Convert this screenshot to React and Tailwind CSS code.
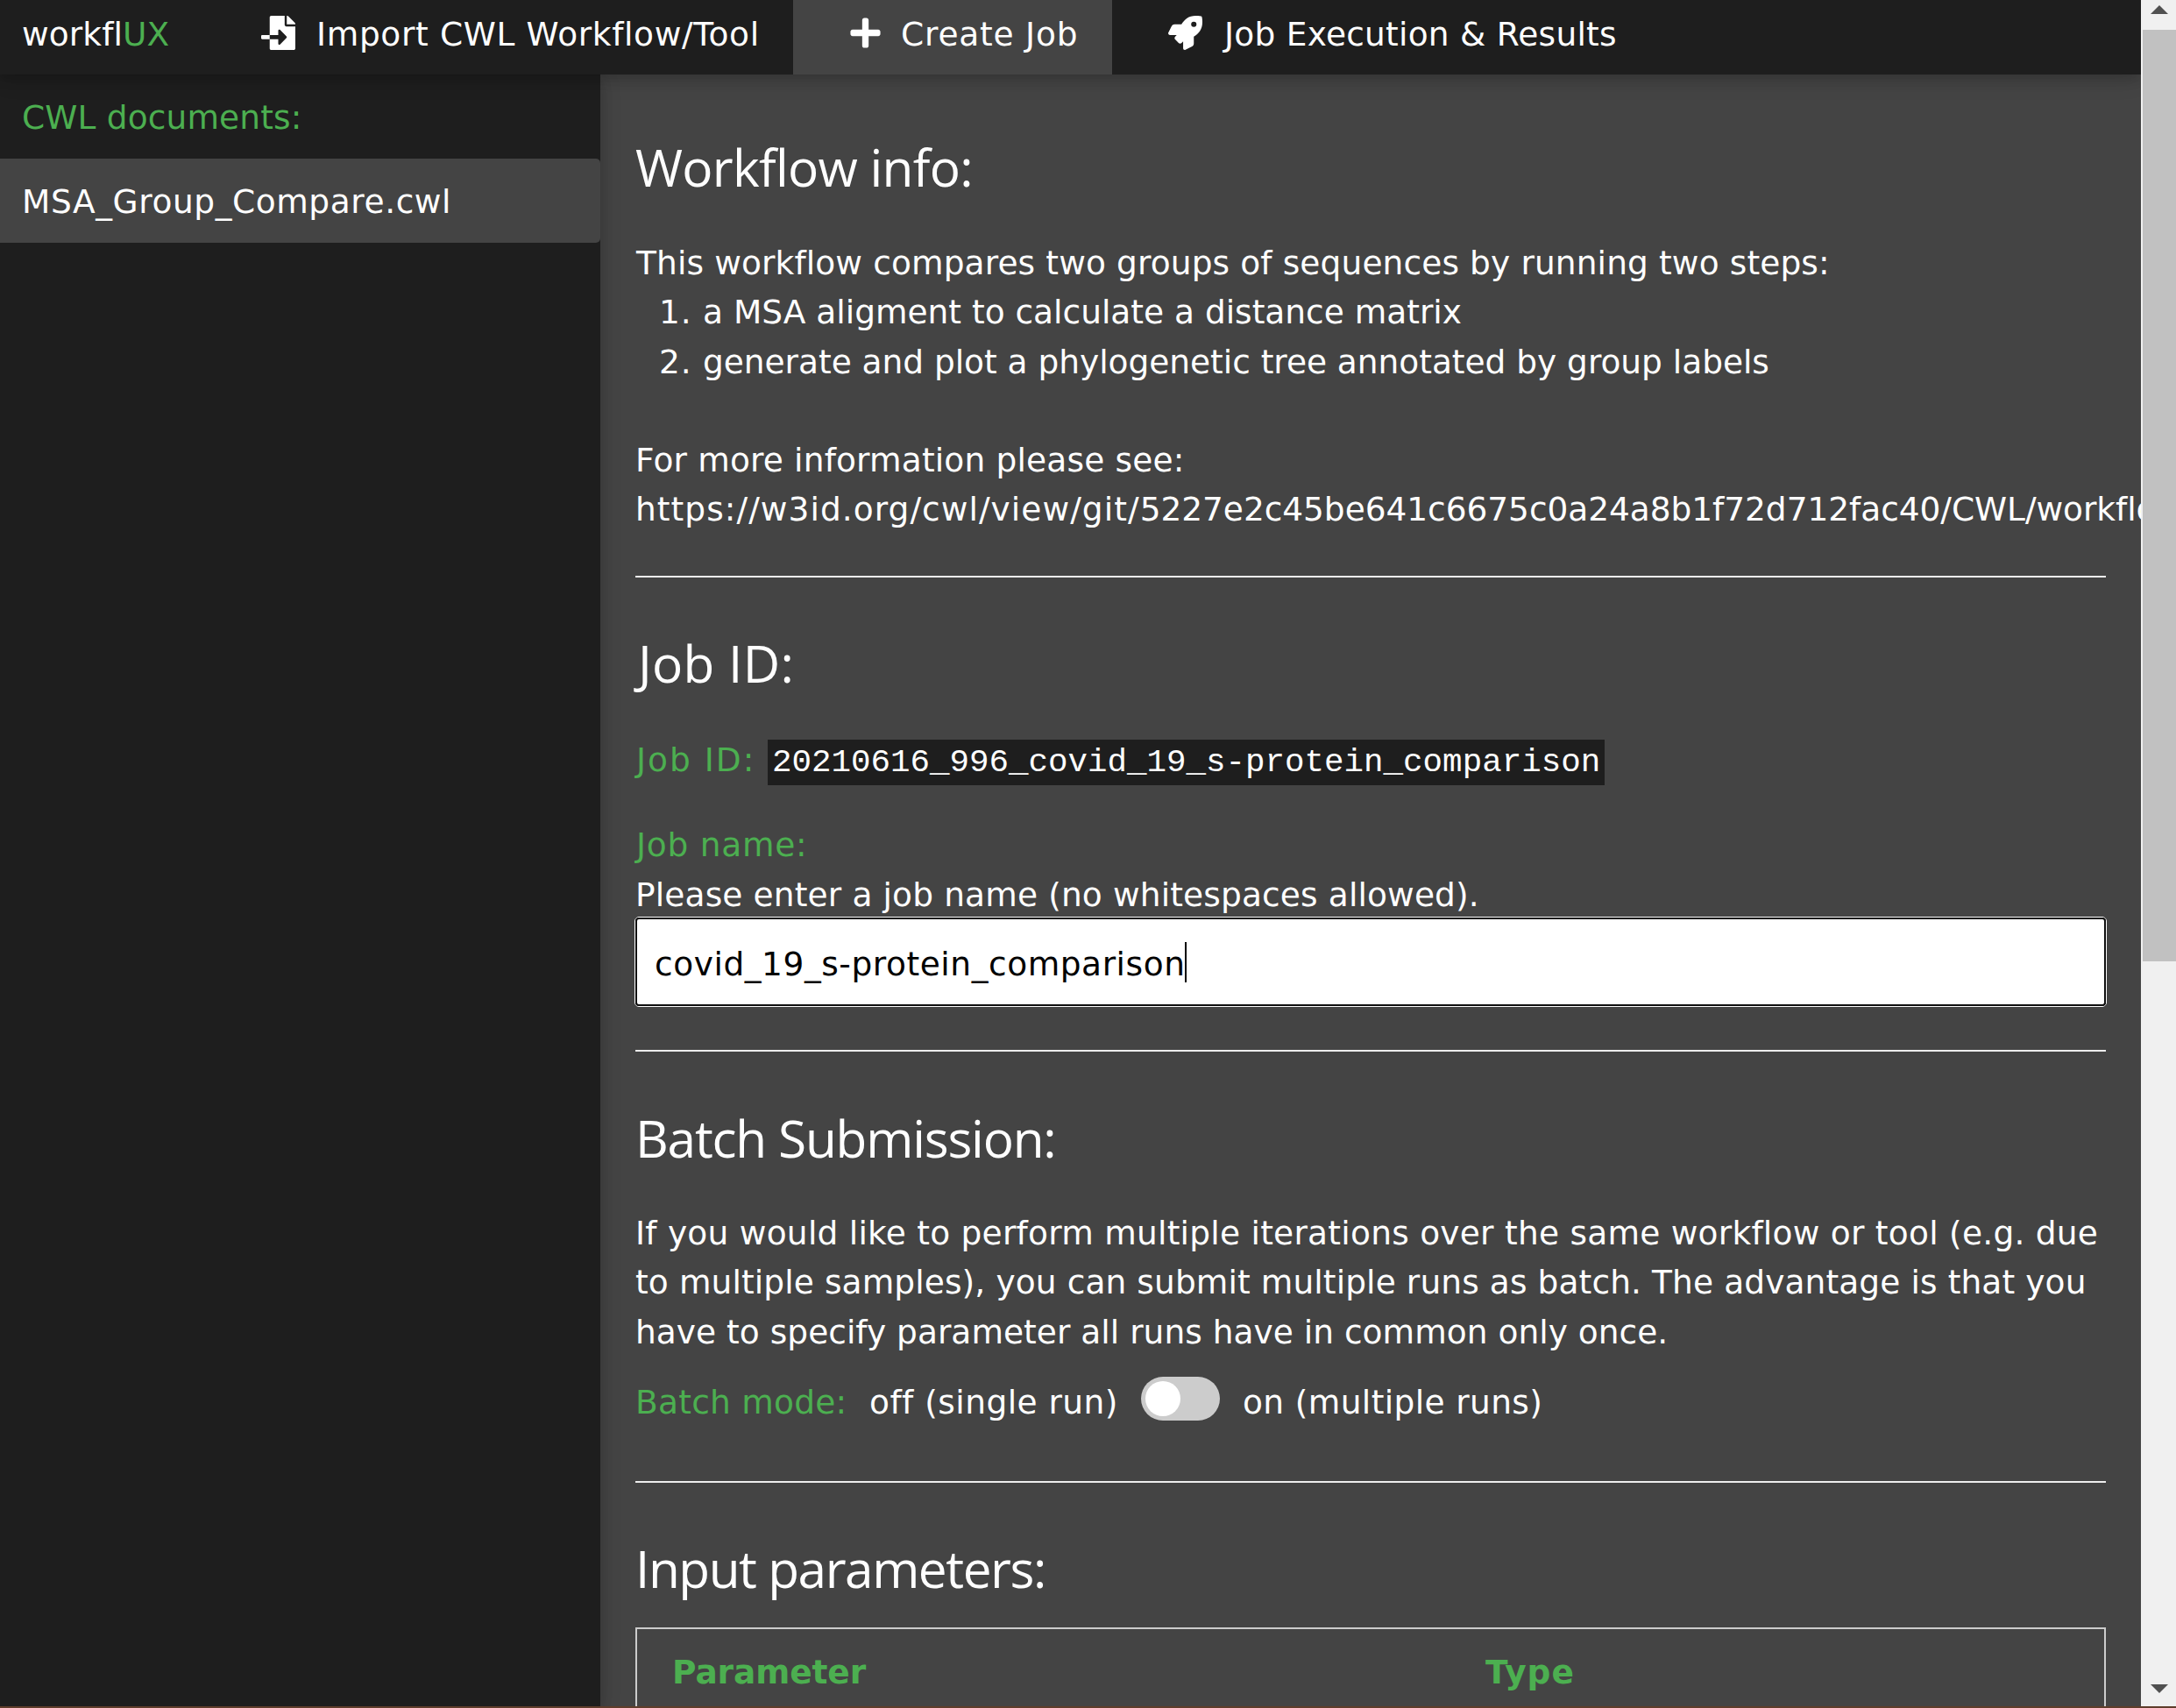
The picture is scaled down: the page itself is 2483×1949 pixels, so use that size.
import React from 'react';
import { FaFileImport, FaPlus, FaRocket } from 'react-icons/fa';

function Heading({ className = '', children }) {
  return (
    <h2 className={`h-[90px] whitespace-nowrap font-['Open_Sans',sans-serif] text-[58.5px] leading-[90px] font-normal text-white ${className}`}>
      {children}
    </h2>
  );
}

function Line({ className = '', children }) {
  return <div className={`h-[56.25px] whitespace-nowrap ${className}`}>{children}</div>;
}

function Divider() {
  return <div className="h-[2px] w-[1678px] shrink-0 bg-[#eeeeee]" />;
}

function NavBar() {
  return (
    <nav className="relative z-20 flex h-[85px] shrink-0 bg-[#1e1e1e] shadow-[0_5px_12.5px_rgba(0,0,0,0.16),0_5px_25px_rgba(0,0,0,0.12)]">
      <div className="w-[234px] pt-[10.5px] pl-[25px]">
        <Line className="tracking-[0.1px]">
          workfl<span className="text-[#4caf50]">UX</span>
        </Line>
      </div>
      <div className="flex w-[671px] pt-[10.5px] pl-[64px]">
        <FaFileImport className="mt-[7.5px] h-[39px] w-[39px] shrink-0" />
        <Line className="ml-[24px] tracking-[0.65px]">Import CWL Workflow/Tool</Line>
      </div>
      <div className="flex w-[364px] bg-[#444444] pt-[10.5px] pl-[65px]">
        <FaPlus className="mt-[7.5px] h-[39px] w-[35px] shrink-0" />
        <Line className="ml-[23px] tracking-[0.8px]">Create Job</Line>
      </div>
      <div className="flex pt-[10.5px] pl-[64px]">
        <FaRocket className="mt-[7.5px] h-[39px] w-[39px] shrink-0" />
        <Line className="ml-[25px] tracking-[0.241px]">Job Execution &amp; Results</Line>
      </div>
    </nav>
  );
}

function Sidebar() {
  return (
    <aside className="relative z-10 w-[685px] shrink-0 bg-[#1e1e1e] shadow-[0_5px_12.5px_rgba(0,0,0,0.16),0_5px_25px_rgba(0,0,0,0.12)]">
      <div className="h-[96px] pt-[21px] pl-[25px] tracking-[0.15px] text-[#4caf50]">CWL documents:</div>
      <div className="h-[96px] rounded-r-[5px] bg-[#444444] pt-[21px] pl-[25px] tracking-[0.58px]">
        MSA_Group_Compare.cwl
      </div>
    </aside>
  );
}

function Scrollbar() {
  return (
    <div className="flex w-[40px] shrink-0 flex-col items-end bg-[#f0f0f0]">
      <div className="flex h-[34px] w-[40px] justify-center pt-[6px] pl-[1px]">
        <svg className="h-[10px] w-[20px]" viewBox="0 0 20 10">
          <path d="M0 10L10 0L20 10Z" fill="#505050" />
        </svg>
      </div>
      <div className="h-[1063px] w-[38px] bg-[#c1c1c1]" />
      <div className="flex w-[40px] flex-1 items-end justify-center pb-[15px] pl-[1px]">
        <svg className="h-[10px] w-[20px]" viewBox="0 0 20 10">
          <path d="M0 0L10 10L20 0Z" fill="#505050" />
        </svg>
      </div>
    </div>
  );
}

function WorkflowInfo() {
  return (
    <section className="h-[572px] shrink-0 pt-[60px]">
      <Heading className="tracking-[-0.72px]">Workflow info:</Heading>
      <div className="mt-[37px]">
        <Line className="ml-[1px] tracking-[0.124px]">
          This workflow compares two groups of sequences by running two steps:
        </Line>
        <Line className="flex">
          <span className="ml-[27px] w-[50px] tracking-[1px]">1.</span>
          <span>a MSA aligment to calculate a distance matrix</span>
        </Line>
        <Line className="flex">
          <span className="ml-[27px] w-[50px] tracking-[1px]">2.</span>
          <span className="tracking-[-0.025px]">generate and plot a phylogenetic tree annotated by group labels</span>
        </Line>
        <Line className="mt-[56.25px] tracking-[0.17px]">For more information please see:</Line>
        <Line className="tracking-[-0.05px]">
          <span className="tracking-[1.05px]">https://w3id.org/cwl/view/git/</span>
          5227e2c45be641c6675c0a24a8b1f72d712fac40/CWL/workflows
        </Line>
      </div>
    </section>
  );
}

function JobId() {
  return (
    <section className="h-[539px] shrink-0 pt-[52px]">
      <Heading className="ml-[3px] tracking-[0.3px]">Job ID:</Heading>
      <Line className="mt-[38px] flex text-[#4caf50]">
        <span className="w-[149px] pl-[1px] tracking-[2px]">Job ID:</span>
        <span className="mt-[5px] ml-[2px] h-[52px] w-[955px] bg-[#1e1e1e] pl-[5px] font-['Liberation_Mono',monospace] leading-[52px] text-white">
          20210616_996_covid_19_s-protein_comparison
        </span>
      </Line>
      <Line className="mt-[41px] pl-[1px] tracking-[0.741px] text-[#4caf50]">Job name:</Line>
      <Line className="tracking-[0.14px]">Please enter a job name (no whitespaces allowed).</Line>
      <div className="-mt-[3px] -ml-px h-[103px] w-[1680px] rounded-[5px] border border-white">
        <div className="flex h-full rounded-[4px] border-2 border-[#101010] bg-white pt-[23px] pl-[20px] text-black">
          <Line className="tracking-[0.56px]">covid_19_s-protein_comparison</Line>
          <div className="mt-[3px] -ml-px h-[46px] w-[2px] bg-black" />
        </div>
      </div>
    </section>
  );
}

function BatchSubmission() {
  return (
    <section className="h-[490px] shrink-0 pt-[53px]">
      <Heading className="tracking-[-1.2px]">Batch Submission:</Heading>
      <div className="mt-[36px]">
        <Line className="tracking-[0.25px]">
          If you would like to perform multiple iterations over the same workflow or tool (e.g. due
        </Line>
        <Line className="tracking-[0.11px]">
          to multiple samples), you can submit multiple runs as batch. The advantage is that you
        </Line>
        <Line className="tracking-[0.03px]">have to specify parameter all runs have in common only once.</Line>
      </div>
      <Line className="mt-[24.5px] flex">
        <span className="w-[267px] tracking-[0.25px] text-[#4caf50]">Batch mode:</span>
        <span className="w-[310px] tracking-[0.47px]">off (single run)</span>
        <span className="-mt-[1.5px] h-[50px] w-[90px] rounded-full bg-[#cccccc] p-[5px]">
          <span className="block h-[40px] w-[40px] rounded-full bg-white" />
        </span>
        <span className="ml-[26px] tracking-[0.38px]">on (multiple runs)</span>
      </Line>
    </section>
  );
}

function InputParameters() {
  return (
    <section className="min-h-0 flex-1 pt-[52px]">
      <Heading className="tracking-[-1.45px]">Input parameters:</Heading>
      <div className="mt-[23px] flex h-[200px] w-[1678px] border-2 border-[#cccccc] pt-[21px] pl-[40px] font-bold text-[#4caf50]">
        <div className="w-[928px] tracking-[-0.1px]">Parameter</div>
        <div className="tracking-[1px]">Type</div>
      </div>
    </section>
  );
}

export default function App() {
  return (
    <div className="flex h-[1949px] w-full flex-col overflow-hidden bg-[#5f3d2b] font-['DejaVu_Sans',Verdana,sans-serif] text-[37.5px] leading-[56.25px] text-white">
      <div className="flex h-[1947px] shrink-0">
        <div className="flex min-w-0 flex-1 flex-col overflow-hidden bg-[#444444]">
          <NavBar />
          <div className="flex min-h-0 flex-1">
            <Sidebar />
            <main className="flex min-w-0 flex-1 flex-col overflow-hidden pl-[40px]">
              <WorkflowInfo />
              <Divider />
              <JobId />
              <Divider />
              <BatchSubmission />
              <Divider />
              <InputParameters />
            </main>
          </div>
        </div>
        <Scrollbar />
      </div>
    </div>
  );
}
